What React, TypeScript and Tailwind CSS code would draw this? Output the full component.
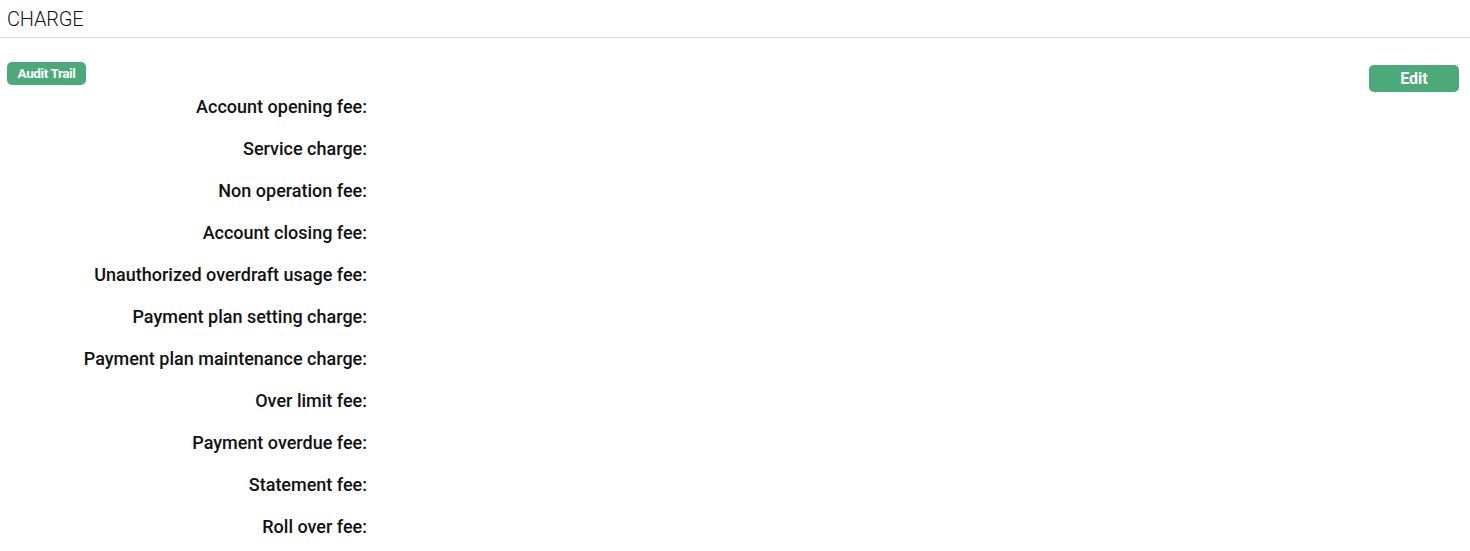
export default function App() {
  const labels = [
    "Account opening fee:",
    "Service charge:",
    "Non operation fee:",
    "Account closing fee:",
    "Unauthorized overdraft usage fee:",
    "Payment plan setting charge:",
    "Payment plan maintenance charge:",
    "Over limit fee:",
    "Payment overdue fee:",
    "Statement fee:",
    "Roll over fee:",
  ];
  return (
    <div className="w-[1470px] h-[551px] bg-white text-[#111] overflow-hidden" style={{ fontFamily: "Roboto, 'Noto Sans', sans-serif" }}>
      <div className="h-[38px] border-b border-[#dcdcdc] flex items-center pl-[7px]">
        <h1 className="text-[20px] font-light tracking-[-0.2px] leading-none pt-[1px]">CHARGE</h1>
      </div>
      <div className="flex justify-between pl-[7px] pr-[11px] pt-[23px]">
        <div>
          <button className="h-[23px] w-[79px] rounded-[5px] bg-[#4caa7a] text-white text-[13.5px] font-bold tracking-[-0.4px] leading-none">
            Audit Trail
          </button>
          <div className="flex flex-col mt-[11px]">
            {labels.map((l) => (
              <div key={l} className="h-[42px] w-[360px] flex items-start justify-end">
                <span className="text-[18px] font-medium tracking-[0px] leading-[22px]">{l}</span>
              </div>
            ))}
          </div>
        </div>
        <button className="mt-[4px] h-[27px] w-[90px] rounded-[5px] bg-[#4caa7a] text-white text-[16px] font-bold leading-none">
          Edit
        </button>
      </div>
    </div>
  );
}
